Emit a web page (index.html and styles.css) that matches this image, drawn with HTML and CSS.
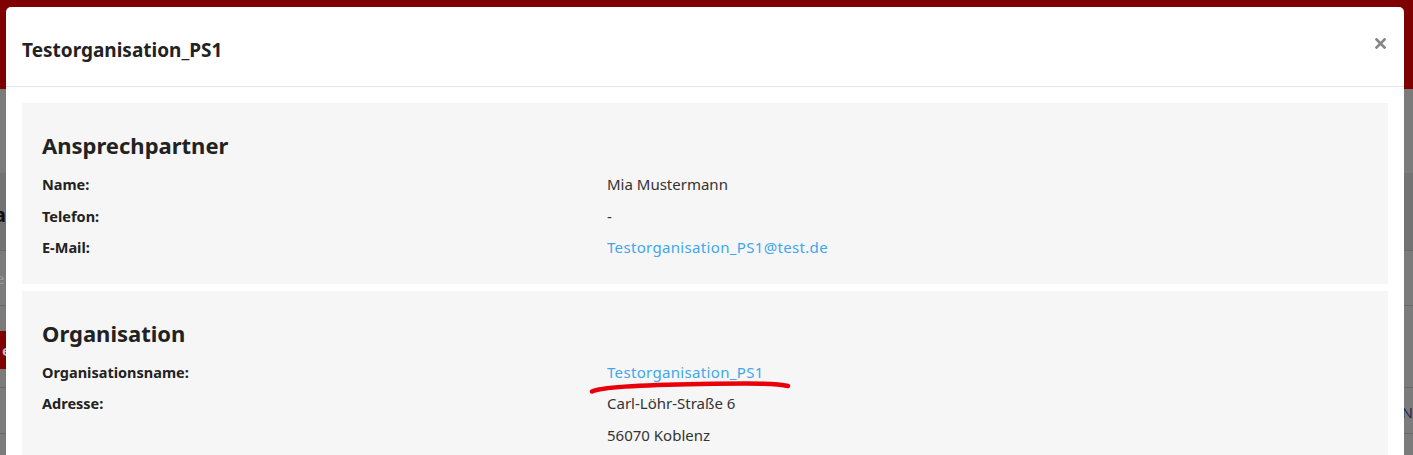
FILE: index.html
```html
<!DOCTYPE html>
<html>
<head>
    <meta charset="utf-8">
    <link rel="stylesheet" href="styles.css">
</head>
<body>
    <div class="page">
        <div class="topbar"></div>
        <div class="band"></div>
        <div class="toolbar"><span class="bg-title">a</span></div>
        <div class="bg-row"><span class="bg-text">e</span></div>
        <div class="bg-row bg-row-btn"><span class="bg-btn">er</span></div>
        <div class="bg-row bg-row-table"><span class="bg-cell">N</span></div>
        <div class="bg-row"></div>
    </div>

    <div class="modal">
        <div class="modal-header">
            <h4 class="modal-title">Testorganisation_PS1</h4>
            <button class="close" type="button" aria-label="Schließen">
                <svg width="11" height="11" viewBox="0 0 11 11">
                    <path d="M1.5 1.5 L9.5 9.5 M9.5 1.5 L1.5 9.5" stroke="#858585" stroke-width="2.6" stroke-linecap="square"/>
                </svg>
            </button>
        </div>
        <div class="modal-body">
            <div class="panel">
                <h3>Ansprechpartner</h3>
                <div class="row">
                    <div class="label">Name:</div>
                    <div class="value">Mia Mustermann</div>
                </div>
                <div class="row">
                    <div class="label">Telefon:</div>
                    <div class="value">-</div>
                </div>
                <div class="row">
                    <div class="label">E-Mail:</div>
                    <div class="value"><a href="#">Testorganisation_PS1@test.de</a></div>
                </div>
            </div>
            <div class="panel">
                <h3>Organisation</h3>
                <div class="row">
                    <div class="label">Organisationsname:</div>
                    <div class="value"><a href="#">Testorganisation_PS1</a></div>
                </div>
                <div class="row">
                    <div class="label">Adresse:</div>
                    <div class="value">
                        <div>Carl-Löhr-Straße 6</div>
                        <div>56070 Koblenz</div>
                    </div>
                </div>
            </div>
        </div>
    </div>

    <!-- Markierung -->
    <svg class="marker" width="1413" height="455" viewBox="0 0 1413 455">
        <path d="M592 391.5 C 601 387, 640 385, 700 384 S 778 383.5, 788 386" fill="none" stroke="#e8000b" stroke-width="4.5" stroke-linecap="round"/>
    </svg>
</body>
</html>
```

FILE: styles.css
```css
html, body {
    margin: 0;
    padding: 0;
    height: 100%;
    overflow: hidden;
}
body {
    font-family: "Noto Sans", "Open Sans", sans-serif;
    font-size: 15px;
    color: #212529;
    background: #7b7b7b;
}

/* page behind the dialog (already dimmed) */
.page {
    height: 100%;
}
.topbar {
    height: 89px;
    background: #7f0000;
}
.band {
    height: 84px;
}
.toolbar {
    height: 77px;
    background: #737373;
    border-bottom: 1px solid #6a6a6a;
    position: relative;
}
.bg-row {
    height: 54px;
    border-bottom: 1px solid #6a6a6a;
    position: relative;
}
.bg-row-btn {
    height: 81px;
}
.bg-row-table {
    height: 45px;
}
.bg-title {
    position: absolute;
    left: -6px;
    top: 28px;
    font-size: 20px;
    font-weight: bold;
    color: #111;
}
.bg-text {
    position: absolute;
    left: -4px;
    top: 17px;
    color: #9a9a9a;
}
.bg-btn {
    position: absolute;
    left: -8px;
    top: 25px;
    height: 38px;
    line-height: 38px;
    padding: 0 10px;
    background: #800000;
    color: #bbb;
    font-weight: bold;
}
.bg-cell {
    position: absolute;
    right: 0;
    top: 14px;
    color: #2a2450;
    font-size: 15px;
}

/* dialog */
.modal {
    position: absolute;
    top: 7px;
    left: 6px;
    width: 1398px;
    height: 520px;
    background: #fff;
    border-radius: 5px;
    overflow: hidden;
}
.modal-header {
    height: 80px;
    box-sizing: border-box;
    padding: 0 16px;
    border-bottom: 1px solid #e4e4e4;
    display: flex;
    align-items: center;
    justify-content: space-between;
}
.modal-title {
    margin: 0;
    font-size: 19px;
    font-weight: bold;
    color: #222;
    padding-top: 6px;
}
.close {
    border: 0;
    background: none;
    padding: 0;
    margin-bottom: 7px;
    margin-right: 2px;
    cursor: pointer;
    display: flex;
}
.modal-body {
    padding: 16px;
}

.panel {
    background: #f6f6f6;
    padding: 26px 20px 20px;
    margin-bottom: 7px;
}
.panel h3 {
    margin: 0 0 8px;
    font-size: 22px;
    line-height: 32px;
    font-weight: bold;
    color: #222;
}
.row {
    display: flex;
    line-height: 31.5px;
}
.label {
    width: 565px;
    font-weight: bold;
    font-size: 14.5px;
    color: #222;
}
.value {
    flex: 1;
    color: #333;
}
.value a {
    color: #41a6ee;
    text-decoration: none;
    letter-spacing: 0.33px;
}

.marker {
    position: absolute;
    left: 0;
    top: 0;
    pointer-events: none;
}
```
